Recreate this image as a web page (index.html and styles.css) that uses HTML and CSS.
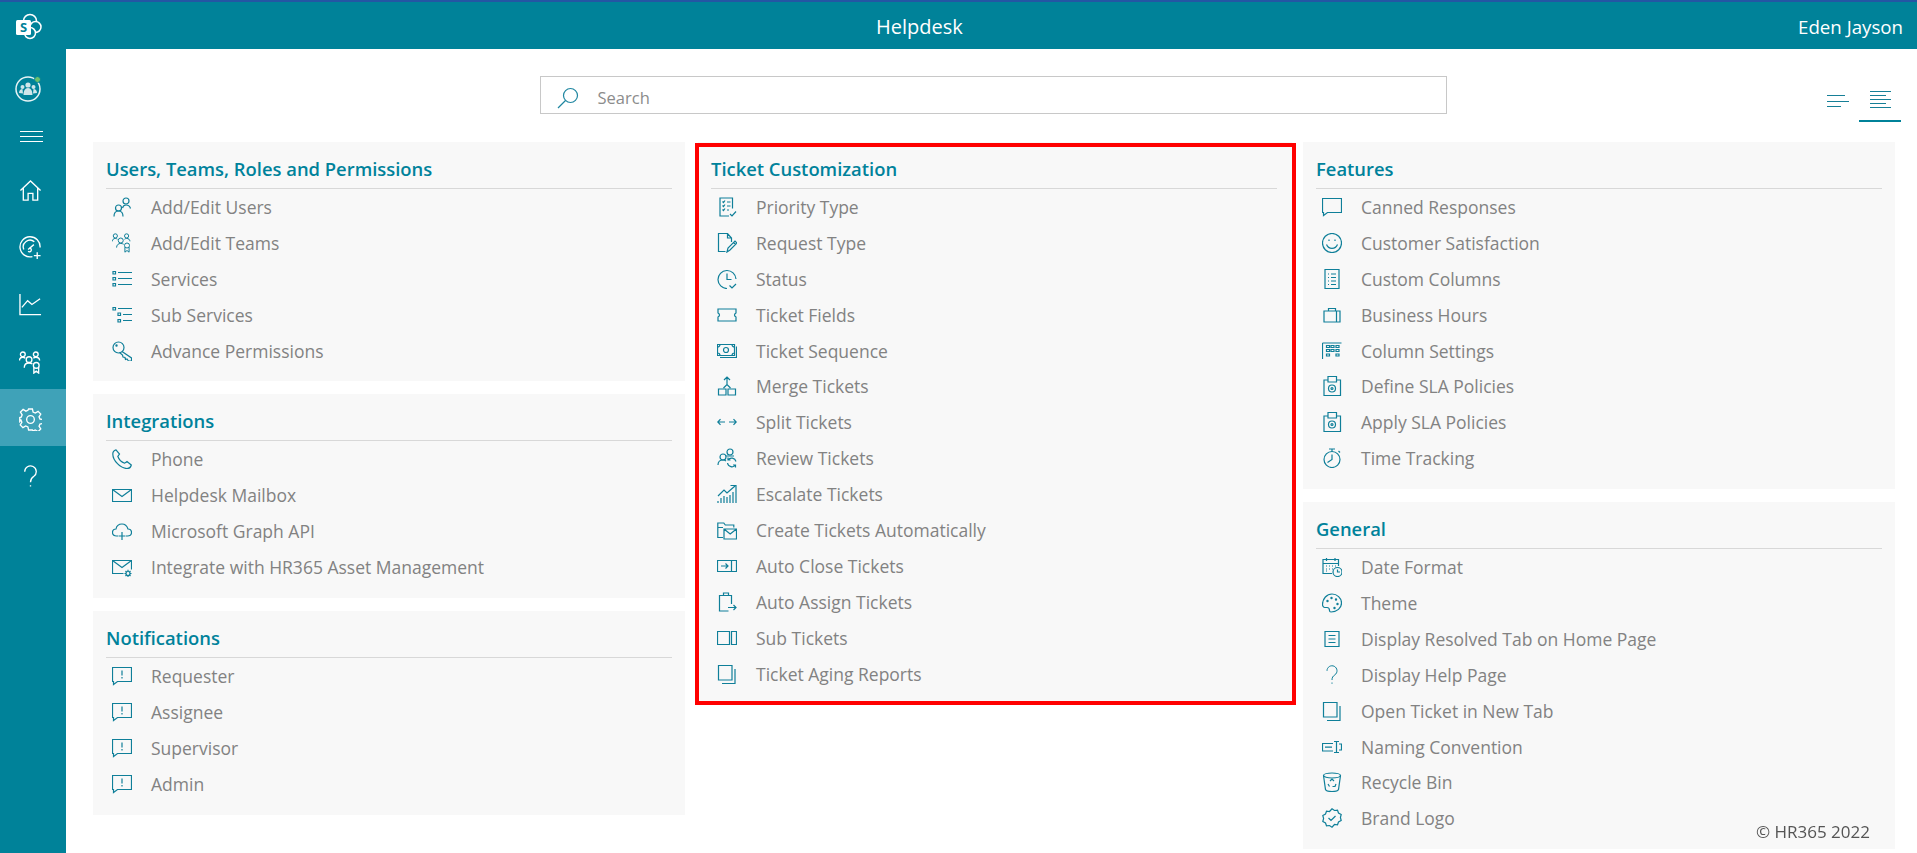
FILE: index.html
```html
<!DOCTYPE html>
<html lang="en">
<head>
    <meta charset="UTF-8">
    <meta name="viewport" content="width=device-width, initial-scale=1.0">
    <title>Helpdesk</title>
    <link rel="stylesheet" href="styles.css">
</head>
<body>
    <!-- Icon sprite -->
    <svg class="sprite" xmlns="http://www.w3.org/2000/svg">
        <symbol id="i-home" viewBox="0 0 24 24"><path d="M1.5 12 12 2l10.500 10M4.500 9.500V22h5v-7h5v7h5V9.500"/></symbol>
        <symbol id="i-gauge" viewBox="0 0 24 24"><path d="M14 21.500A10.500 10.500 0 1 1 22 12M5 14a7 7 0 0 1 11-8M9.500 14l6-5M11 12.500a2 2 0 1 1-1.500 3.500M19 17v7M15.500 20.500h7"/></symbol>
        <symbol id="i-chart" viewBox="0 0 24 24"><path d="M1 1v21.500h22M3 15l6-7 4.500 4L22 6"/></symbol>
        <symbol id="i-teams" viewBox="0 0 24 24"><circle cx="4" cy="3.500" r="2.500"/><circle cx="17.500" cy="3.500" r="2.500"/><circle cx="10.500" cy="9" r="3"/><path d="M.5 10c0-2 1.200-3.500 3.500-3.500 1 0 2 .5 2.500 1M21.500 10c0-2-1.500-3.500-4-3.500-1 0-2 .5-2.500 1M5.500 17.500c0-3 2-5 5-5 1.500 0 2.500.5 3.500 1"/><circle cx="18" cy="15" r="3"/><path d="M15.500 17v6l2.500-2 2.500 2v-6"/></symbol>
        <symbol id="i-gear" viewBox="0 0 24 24"><circle cx="12" cy="12" r="4"/><path d="M10 1h4l.7 3.300 2.300 1 2.900-1.800 2.800 2.800-1.800 2.900 1 2.300 3.300.5v4l-3.300.7-1 2.300 1.800 2.900-2.800 2.800-2.900-1.800-2.300 1L14 23h-4l-.7-3.300-2.300-1-2.900 1.800-2.800-2.800L3 14.800l-1-2.300L.8 14v-4l1.500-.5 1-2.300-1.800-2.900 2.800-2.800L7.200 3.300l2.100-.9z"/></symbol>
        <symbol id="i-help" viewBox="0 0 20 24"><path d="M4 7a6 6 0 1 1 9.500 4.800C11 13.500 10 15 10 18M10 21v1.500"/></symbol>
        <symbol id="i-search" viewBox="0 0 22 22"><circle cx="13.500" cy="8.500" r="7"/><path d="M8.500 13.500 1 21"/></symbol>

        <symbol id="i-user" viewBox="0 0 20 20"><circle cx="14" cy="4" r="3"/><path d="M10.500 11c.5-2 2-3 3.500-3 2.500 0 4 1.500 4.500 3.500"/><circle cx="6.500" cy="11" r="3"/><path d="M2 19.500c0-3.500 2-5.500 4.500-5.500s4.500 2 4.500 5.500"/></symbol>
        <symbol id="i-services" viewBox="0 0 20 20"><path d="M1 2.500h2.500V5H1zM1 8.500h2.500V11H1zM1 14.500h2.500V17H1zM6 3.500h14M6 9.500h14M6 15.500h14"/></symbol>
        <symbol id="i-subservices" viewBox="0 0 20 20"><path d="M1 2.500h2.500V5H1zM6 8h2.500v2.500H6zM6 14.500h2.500V17H6zM6 3.500h14M11 9.500h9M11 15.500h9"/></symbol>
        <symbol id="i-key" viewBox="0 0 20 20"><circle cx="6.500" cy="6.500" r="5.500"/><circle cx="4.500" cy="4.500" r=".6"/><path d="M10 10.500 19.500 17v3h-3l-1.500-2-1.500.5-.5-2-2-.5-.5-2-3-2.500"/></symbol>
        <symbol id="i-phone" viewBox="0 0 20 20"><path d="M4 .8 7.500 5 5.800 7.300c1 3 3.900 6 6.900 6.900L15 12.500l4.300 3.500c-.5 2-2.300 3.500-4.300 3.500C8.500 19.500.8 11.500.8 5 .8 3 2 1.300 4 .8z"/></symbol>
        <symbol id="i-mail" viewBox="0 0 20 20"><path d="M.5 4.500h19v12H.5zM.5 4.500l9.500 7 9.500-7"/></symbol>
        <symbol id="i-cloud" viewBox="0 0 20 20"><path d="M6 15H4.500C2 15 .5 13.500.5 11.500S2 8 4 8c.5-3 3-5 6-5s5 2 6 5c2 0 3.500 1.500 3.500 3.500S18 15 15.500 15H14M10 11v8M6.500 15h7"/></symbol>
        <symbol id="i-mailgear" viewBox="0 0 20 20"><path d="M11.500 16.500H.5v-13h19v9M.5 3.500l9.500 7 9.500-7"/><circle cx="16" cy="16.500" r="2"/><path d="M16 12.800v1.500M16 18.700v1.300M12.500 16.500H14M18 16.500h1.500M13.500 14l1 1M17.500 18l1 1M13.500 19l1-1M17.500 15l1-1"/></symbol>
        <symbol id="i-alert" viewBox="0 0 20 20"><path d="M.5 1.500h19v14H5.500L1.500 18.500v-3h-1zM10 4.500v5M10 11v1.500"/></symbol>
        <symbol id="i-comment" viewBox="0 0 20 20"><path d="M.5 1.500h19v14H5.500L1.500 18.500v-3h-1z"/></symbol>

        <symbol id="i-priority" viewBox="0 0 20 20"><path d="M15.500 11.500V1H3v18h9M5.500 4.500l1 1 1.500-2M5.500 8.500l1 1 1.500-2M5.500 12.500l1 1 1.500-2M10 5h3.500M10 9h3.500M10 13h2M13 17l2 2 4-4.500"/></symbol>
        <symbol id="i-request" viewBox="0 0 20 20"><path d="M14.500 9V5L10.500.5H1.500v18h7M10.500.5V5h4M10 19l1-4 7-7 2 2-7 7zM16.500 9.500l2 2"/></symbol>
        <symbol id="i-status" viewBox="0 0 20 20"><path d="M10 19.500a9 9 0 1 1 9-9.500M10 4.500v6h4.500M12.500 16.500l2.500 2.500 4-4"/></symbol>
        <symbol id="i-ticket" viewBox="0 0 20 20"><path d="M1 4h18v4c-1 .5-1.500 1.200-1.500 2s.5 1.500 1.500 2v4H1v-4c1-.5 1.500-1.200 1.500-2S2 8.500 1 8z"/></symbol>
        <symbol id="i-money" viewBox="0 0 20 20"><path d="M.5 3.500h17v11H.5zM19.500 5.500v11H3M3 3.500c0 1.500-1 2.500-2.500 2.500M15 3.500c0 1.500 1 2.500 2.500 2.500M3 14.500c0-1.500-1-2.500-2.500-2.500M15 14.500c0-1.500 1-2.500 2.500-2.500"/><circle cx="9" cy="9" r="2.500"/></symbol>
        <symbol id="i-merge" viewBox="0 0 20 20"><path d="M1.500 13h7.500v6H1.500zM11 13h7.500v6H11zM10 9V1M7 4l3-3 3 3M6.500 12 10 8.500l3.500 3.500"/></symbol>
        <symbol id="i-split" viewBox="0 0 20 20"><path d="M.8 10H8M12 10h7.200M3.500 7.200.8 10l2.700 2.800M16.500 7.200l2.700 2.800-2.700 2.800"/></symbol>
        <symbol id="i-review" viewBox="0 0 20 20"><circle cx="13" cy="4" r="3"/><circle cx="6" cy="9" r="3"/><path d="M1 17c0-3 2-5 5-5 1.500 0 2.500.5 3 1M9 8h8M19 13.500a4.500 4.500 0 0 0-8-1.500M10.500 15a4.500 4.500 0 0 0 8 2M11 9.500V12h2.500M18.500 19.500V17H16"/></symbol>
        <symbol id="i-escalate" viewBox="0 0 20 20"><path d="M1 19v-2M4 19v-5M7 19v-7M10 19v-6M13 19v-8M16 19V8M19 19V6M1 12 7 6l3 3 8-7M13.500 1.500H19V7"/></symbol>
        <symbol id="i-foldermail" viewBox="0 0 20 20"><path d="M6 17.500H.8V3h6l1.500 2h8.500v2.500M.8 7.500H6M7 9h12.500v10H7zM7 9l6.200 5 6.300-5"/></symbol>
        <symbol id="i-autoclose" viewBox="0 0 20 20"><path d="M.5 4.500h19v11H.5zM14.500 4.500v11M4 10h7M8.500 7.500 11 10l-2.500 2.500"/></symbol>
        <symbol id="i-assign" viewBox="0 0 20 20"><path d="M14.500 12V3.500h-3V1H6.500v2.500h-4v15.500h9M5.500 3.500h7M11 15.500h8M16.500 13l2.500 2.500-2.500 2.500"/></symbol>
        <symbol id="i-subticket" viewBox="0 0 20 20"><path d="M.5 3.500h12v13H.5zM14.500 3.500h5v13h-5z"/></symbol>
        <symbol id="i-copy" viewBox="0 0 20 20"><path d="M1.500 1.500h13.500v14.500H1.500zM18 5v14.500H5"/></symbol>

        <symbol id="i-smile" viewBox="0 0 20 20"><circle cx="10" cy="10" r="9.500"/><path d="M4.500 11.500c1 2.500 3 3.800 5.500 3.800s4.500-1.300 5.500-3.800M7 6.500v1.500M13 6.500v1.500"/></symbol>
        <symbol id="i-columns" viewBox="0 0 20 20"><path d="M3 .5h14v19H3zM6 5h1M9 5h5M6 8.500h1M9 8.500h5M6 12h1M9 12h5M6 15.500h1M9 15.500h5"/></symbol>
        <symbol id="i-brief" viewBox="0 0 20 20"><path d="M2 6h16v11H2zM6.500 6V3.500h7V6M14.500 6v11"/></symbol>
        <symbol id="i-grid" viewBox="0 0 20 20"><path d="M.5 2h19M.5 2v16M4.500 4.500h3v2h-3zM9 4.500h3v2H9zM14 4.500h3v2h-3zM4.500 8.500h3v2h-3zM9 8.500h3v2H9zM14 8.500h3v2h-3zM4.500 13h3v2h-3zM14 13h3v2h-3z"/></symbol>
        <symbol id="i-sla" viewBox="0 0 20 20"><path d="M5.500 4H2v15.500h16.500V4H15M6 .5h8.500V6H6z"/><circle cx="10" cy="12.500" r="3.500"/><circle cx="10" cy="12.500" r="1"/></symbol>
        <symbol id="i-watch" viewBox="0 0 20 20"><circle cx="10" cy="11.500" r="8"/><path d="M7 1h6M10 1v2.500M16.500 3l1.500 1.500M10 6.500v5l-4.500 3"/></symbol>

        <symbol id="i-date" viewBox="0 0 20 20"><path d="M10 16.500H1V2.500h15.500V9M1 6.500h15.500M4.500 1v3M13 1v3M4 9h1M7 9h1M10 9h1M13 9h1M4 12h1M7 12h1M10 12h1M4 14h1"/><circle cx="15.500" cy="15" r="4.500"/><path d="M15.500 12.500V15H18"/></symbol>
        <symbol id="i-palette" viewBox="0 0 20 20"><path d="M9 19c-1 0-1.500-.5-1.500-1.500 0-1.500-.5-3-2.500-3-1.500 0-4.500.5-4.500-3C.5 5.500 5 1 10 1s9.500 4 9.500 9-4.500 9-10.500 9z"/><circle cx="5.500" cy="8" r=".6"/><circle cx="9.500" cy="5" r=".6"/><circle cx="14" cy="6.500" r=".6"/><circle cx="15.500" cy="11" r=".6"/><circle cx="12.500" cy="15" r=".6"/></symbol>
        <symbol id="i-resolved" viewBox="0 0 20 20"><path d="M3 2.500h14v15H3zM6.500 6.500h7M6.500 10h7M6.500 13.500h7"/></symbol>
        <symbol id="i-naming" viewBox="0 0 20 20"><path d="M11 6.500H.5v7.500H11M3 10.200h7M12 4.500h2.500v11H12M17 4.500h-2.500M17 15.500h-2.500M17 7h2.500v6H17"/></symbol>
        <symbol id="i-bin" viewBox="0 0 20 20"><ellipse cx="10" cy="3.500" rx="8.500" ry="2.500"/><path d="M1.500 3.500l2 14c.5 1.500 3.500 2 6.500 2s6-.5 6.500-2l2-14M8 9l2-2 2 2M14 12l-1 2.500h-2.500M6 12l1.500 2.500"/></symbol>
        <symbol id="i-brand" viewBox="0 0 20 20"><path d="m10 .8 2.500 1.700 3-.3 1 2.800 2.700 1.500-.8 3 .8 3-2.700 1.500-1 2.800-3-.3L10 19.200l-2.500-1.700-3 .3-1-2.800-2.700-1.500.8-3-.8-3 2.700-1.500 1-2.800 3 .3zM6.500 10l2.500 2.500 4.500-4.500"/></symbol>
    </svg>

    <header class="topbar">
        <svg class="sp-logo" viewBox="0 0 28 28" aria-hidden="true">
            <circle class="sp-ring" cx="15" cy="8" r="6.500"/>
            <circle class="sp-ring" cx="20.500" cy="14" r="5.500"/>
            <circle class="sp-ring" cx="15" cy="20" r="5.500"/>
            <rect class="sp-box" x="1" y="7" width="15" height="15" rx="1.500"/>
            <text class="sp-letter" x="8.500" y="19">S</text>
        </svg>
        <div class="topbar-title">Helpdesk</div>
        <div class="topbar-user">Eden Jayson</div>
    </header>

    <div class="shell">
        <nav class="sidebar">
            <div class="side-logo">
                <svg viewBox="0 0 28 28" aria-hidden="true">
                    <circle class="logo-ring" cx="14" cy="15" r="12"/>
                    <circle class="logo-fill" cx="14" cy="11" r="2.600"/>
                    <circle class="logo-fill" cx="8.500" cy="13" r="2"/>
                    <circle class="logo-fill" cx="19.500" cy="13" r="2"/>
                    <path class="logo-fill" d="M9.500 21c0-4 1.500-7 4.500-7s4.500 3 4.500 7zM5 19c0-2.500 1.500-4 3.500-4l.5 4.500zM23 19c0-2.500-1.500-4-3.500-4l-.5 4.500z"/>
                    <circle class="logo-dot" cx="23.500" cy="5.500" r="3"/>
                </svg>
            </div>
            <div class="side-menu"><span></span><span></span><span></span></div>
            <a class="side-item"><svg class="side-icon"><use href="#i-home"/></svg></a>
            <a class="side-item"><svg class="side-icon"><use href="#i-gauge"/></svg></a>
            <a class="side-item"><svg class="side-icon"><use href="#i-chart"/></svg></a>
            <a class="side-item"><svg class="side-icon"><use href="#i-teams"/></svg></a>
            <a class="side-item active"><svg class="side-icon"><use href="#i-gear"/></svg></a>
            <a class="side-item"><svg class="side-icon"><use href="#i-help"/></svg></a>
        </nav>

        <main class="content">
            <div class="toolbar">
                <div class="search">
                    <svg class="search-icon"><use href="#i-search"/></svg>
                    <span class="search-text">Search</span>
                </div>
                <div class="views">
                    <div class="view view-short"><span></span><span></span><span></span></div>
                    <div class="view view-long active"><span></span><span></span><span></span><span></span><span></span></div>
                </div>
            </div>

            <div class="columns">
                <div class="column">
                    <section class="card">
                        <h2>Users, Teams, Roles and Permissions</h2>
                        <ul>
                            <li><svg class="icon"><use href="#i-user"/></svg>Add/Edit Users</li>
                            <li><svg class="icon"><use href="#i-teams"/></svg>Add/Edit Teams</li>
                            <li><svg class="icon"><use href="#i-services"/></svg>Services</li>
                            <li><svg class="icon"><use href="#i-subservices"/></svg>Sub Services</li>
                            <li><svg class="icon"><use href="#i-key"/></svg>Advance Permissions</li>
                        </ul>
                    </section>
                    <section class="card">
                        <h2>Integrations</h2>
                        <ul>
                            <li><svg class="icon"><use href="#i-phone"/></svg>Phone</li>
                            <li><svg class="icon"><use href="#i-mail"/></svg>Helpdesk Mailbox</li>
                            <li><svg class="icon"><use href="#i-cloud"/></svg>Microsoft Graph API</li>
                            <li><svg class="icon"><use href="#i-mailgear"/></svg>Integrate with HR365 Asset Management</li>
                        </ul>
                    </section>
                    <section class="card">
                        <h2>Notifications</h2>
                        <ul>
                            <li><svg class="icon"><use href="#i-alert"/></svg>Requester</li>
                            <li><svg class="icon"><use href="#i-alert"/></svg>Assignee</li>
                            <li><svg class="icon"><use href="#i-alert"/></svg>Supervisor</li>
                            <li><svg class="icon"><use href="#i-alert"/></svg>Admin</li>
                        </ul>
                    </section>
                </div>

                <div class="column">
                    <section class="card card-marked">
                        <h2>Ticket Customization</h2>
                        <ul>
                            <li><svg class="icon"><use href="#i-priority"/></svg>Priority Type</li>
                            <li><svg class="icon"><use href="#i-request"/></svg>Request Type</li>
                            <li><svg class="icon"><use href="#i-status"/></svg>Status</li>
                            <li><svg class="icon"><use href="#i-ticket"/></svg>Ticket Fields</li>
                            <li><svg class="icon"><use href="#i-money"/></svg>Ticket Sequence</li>
                            <li><svg class="icon"><use href="#i-merge"/></svg>Merge Tickets</li>
                            <li><svg class="icon"><use href="#i-split"/></svg>Split Tickets</li>
                            <li><svg class="icon"><use href="#i-review"/></svg>Review Tickets</li>
                            <li><svg class="icon"><use href="#i-escalate"/></svg>Escalate Tickets</li>
                            <li><svg class="icon"><use href="#i-foldermail"/></svg>Create Tickets Automatically</li>
                            <li><svg class="icon"><use href="#i-autoclose"/></svg>Auto Close Tickets</li>
                            <li><svg class="icon"><use href="#i-assign"/></svg>Auto Assign Tickets</li>
                            <li><svg class="icon"><use href="#i-subticket"/></svg>Sub Tickets</li>
                            <li><svg class="icon"><use href="#i-copy"/></svg>Ticket Aging Reports</li>
                        </ul>
                    </section>
                </div>

                <div class="column">
                    <section class="card">
                        <h2>Features</h2>
                        <ul>
                            <li><svg class="icon"><use href="#i-comment"/></svg>Canned Responses</li>
                            <li><svg class="icon"><use href="#i-smile"/></svg>Customer Satisfaction</li>
                            <li><svg class="icon"><use href="#i-columns"/></svg>Custom Columns</li>
                            <li><svg class="icon"><use href="#i-brief"/></svg>Business Hours</li>
                            <li><svg class="icon"><use href="#i-grid"/></svg>Column Settings</li>
                            <li><svg class="icon"><use href="#i-sla"/></svg>Define SLA Policies</li>
                            <li><svg class="icon"><use href="#i-sla"/></svg>Apply SLA Policies</li>
                            <li><svg class="icon"><use href="#i-watch"/></svg>Time Tracking</li>
                        </ul>
                    </section>
                    <section class="card">
                        <h2>General</h2>
                        <ul>
                            <li><svg class="icon"><use href="#i-date"/></svg>Date Format</li>
                            <li><svg class="icon"><use href="#i-palette"/></svg>Theme</li>
                            <li><svg class="icon"><use href="#i-resolved"/></svg>Display Resolved Tab on Home Page</li>
                            <li><svg class="icon"><use href="#i-help"/></svg>Display Help Page</li>
                            <li><svg class="icon"><use href="#i-copy"/></svg>Open Ticket in New Tab</li>
                            <li><svg class="icon"><use href="#i-naming"/></svg>Naming Convention</li>
                            <li><svg class="icon"><use href="#i-bin"/></svg>Recycle Bin</li>
                            <li><svg class="icon"><use href="#i-brand"/></svg>Brand Logo</li>
                        </ul>
                    </section>
                </div>
            </div>
        </main>
    </div>

    <div class="copyright">© HR365 2022</div>
</body>
</html>
```

FILE: styles.css
```css
/* Base */
* {
    box-sizing: border-box;
}
html, body {
    margin: 0;
    height: 100%;
    overflow: hidden;
}
body {
    font-family: "Open Sans", "Noto Sans", sans-serif;
    background-color: #fff;
    color: #828282;
}
.sprite {
    display: none;
}

/* Top bar */
.topbar {
    height: 49px;
    display: flex;
    align-items: center;
    padding: 2px 14px 0 15px;
    background-color: #008299;
    border-top: 2px solid #2456a4;
    color: #fff;
}
.sp-logo {
    width: 28px;
    height: 28px;
    flex: none;
}
.sp-ring {
    fill: #008299;
    stroke: #fff;
    stroke-width: 1.5;
}
.sp-box {
    fill: #fff;
}
.sp-letter {
    fill: #008299;
    font-size: 13px;
    font-weight: 700;
    text-anchor: middle;
}
.topbar-title {
    margin-left: 833px;
    font-size: 20px;
}
.topbar-user {
    margin-left: auto;
    font-size: 18.7px;
}

/* Sidebar */
.shell {
    display: flex;
    height: 804px;
}
.sidebar {
    width: 66px;
    flex: none;
    background-color: #008299;
    display: flex;
    flex-direction: column;
    padding-top: 25px;
}
.side-logo {
    padding-left: 14px;
}
.side-logo svg {
    width: 28px;
    height: 28px;
    display: block;
}
.logo-ring {
    fill: none;
    stroke: #e6f3f5;
    stroke-width: 1.5;
}
.logo-fill {
    fill: #cfe6ea;
}
.logo-dot {
    fill: #6cc06c;
    stroke: #008299;
}
.side-menu {
    margin: 29px 0 18px;
    padding-right: 3px;
    display: flex;
    flex-direction: column;
    align-items: center;
    gap: 4px;
}
.side-menu span {
    width: 23px;
    height: 1px;
    background-color: #fff;
}
.side-item {
    height: 57.3px;
    display: flex;
    align-items: center;
    justify-content: center;
    padding: 3px 6px 0 0;
}
.side-item.active {
    background-color: #3fa2b8;
}
.side-icon {
    width: 23px;
    height: 23px;
    fill: none;
    stroke: #fff;
    stroke-width: 1.4;
}

/* Content */
.content {
    flex: 1;
    padding: 0 22px 0 27px;
    min-width: 0;
}
.toolbar {
    height: 93px;
    display: grid;
    grid-template-columns: 1fr 907px 1fr;
}
.search {
    grid-column: 2;
    height: 38px;
    margin: 27px 1px 0 -1px;
    display: flex;
    align-items: center;
    padding: 5px 0 0 16px;
    border: 1px solid #c8c8c8;
    font-size: 16.5px;
    color: #8c8c8c;
}
.search-icon {
    width: 22px;
    height: 22px;
    margin-right: 19px;
    fill: none;
    stroke: #1f86a0;
    stroke-width: 1.2;
}

/* View toggle */
.views {
    display: flex;
    justify-self: end;
    margin-right: -6px;
    align-items: flex-start;
    padding-top: 42px;
    gap: 10px;
}
.view {
    display: flex;
    flex-direction: column;
}
.view span {
    display: block;
    height: 1px;
    background-color: #167f97;
}
.view-short {
    width: 22px;
    padding-top: 4px;
    gap: 4.5px;
}
.view-short span:nth-child(1) {
    width: 18px;
}
.view-short span:nth-child(3) {
    width: 14px;
}
.view-long {
    width: 42px;
    height: 31px;
    padding: 0 10px 0 11px;
    gap: 3px;
    border-bottom: 2px solid #008299;
}
.view-long span:nth-child(even) {
    width: 16px;
}

/* Columns */
.columns {
    display: grid;
    grid-template-columns: repeat(3, 592px);
    gap: 13px;
}
.column {
    display: flex;
    flex-direction: column;
    gap: 13px;
}

/* Cards */
.card {
    background-color: #f8f8f8;
    padding: 0 13px 13px;
}
.card-marked {
    position: relative;
    margin-right: -2px;
    padding-right: 15px;
}
.card-marked::after {
    content: "";
    position: absolute;
    top: 1px;
    left: -3px;
    right: -3.5px;
    bottom: -0.5px;
    border: 4px solid #f00;
}
.card h2 {
    height: 47px;
    margin: 0;
    padding-top: 8px;
    line-height: 38px;
    font-size: 18.4px;
    font-weight: 600;
    color: #00829b;
    border-bottom: 1px solid #d8d8d8;
}
.card ul {
    list-style: none;
    margin: 0;
    padding: 0;
}
.card li {
    height: 35.9px;
    display: flex;
    align-items: center;
    padding-left: 6px;
    font-size: 17.5px;
}
.icon {
    width: 20px;
    height: 20px;
    flex: none;
    margin-right: 19px;
    fill: none;
    stroke: #0f7f99;
    stroke-width: 1.2;
}

/* Footer */
.copyright {
    position: fixed;
    right: 47px;
    bottom: 10px;
    font-size: 17px;
    color: #555;
}
```
